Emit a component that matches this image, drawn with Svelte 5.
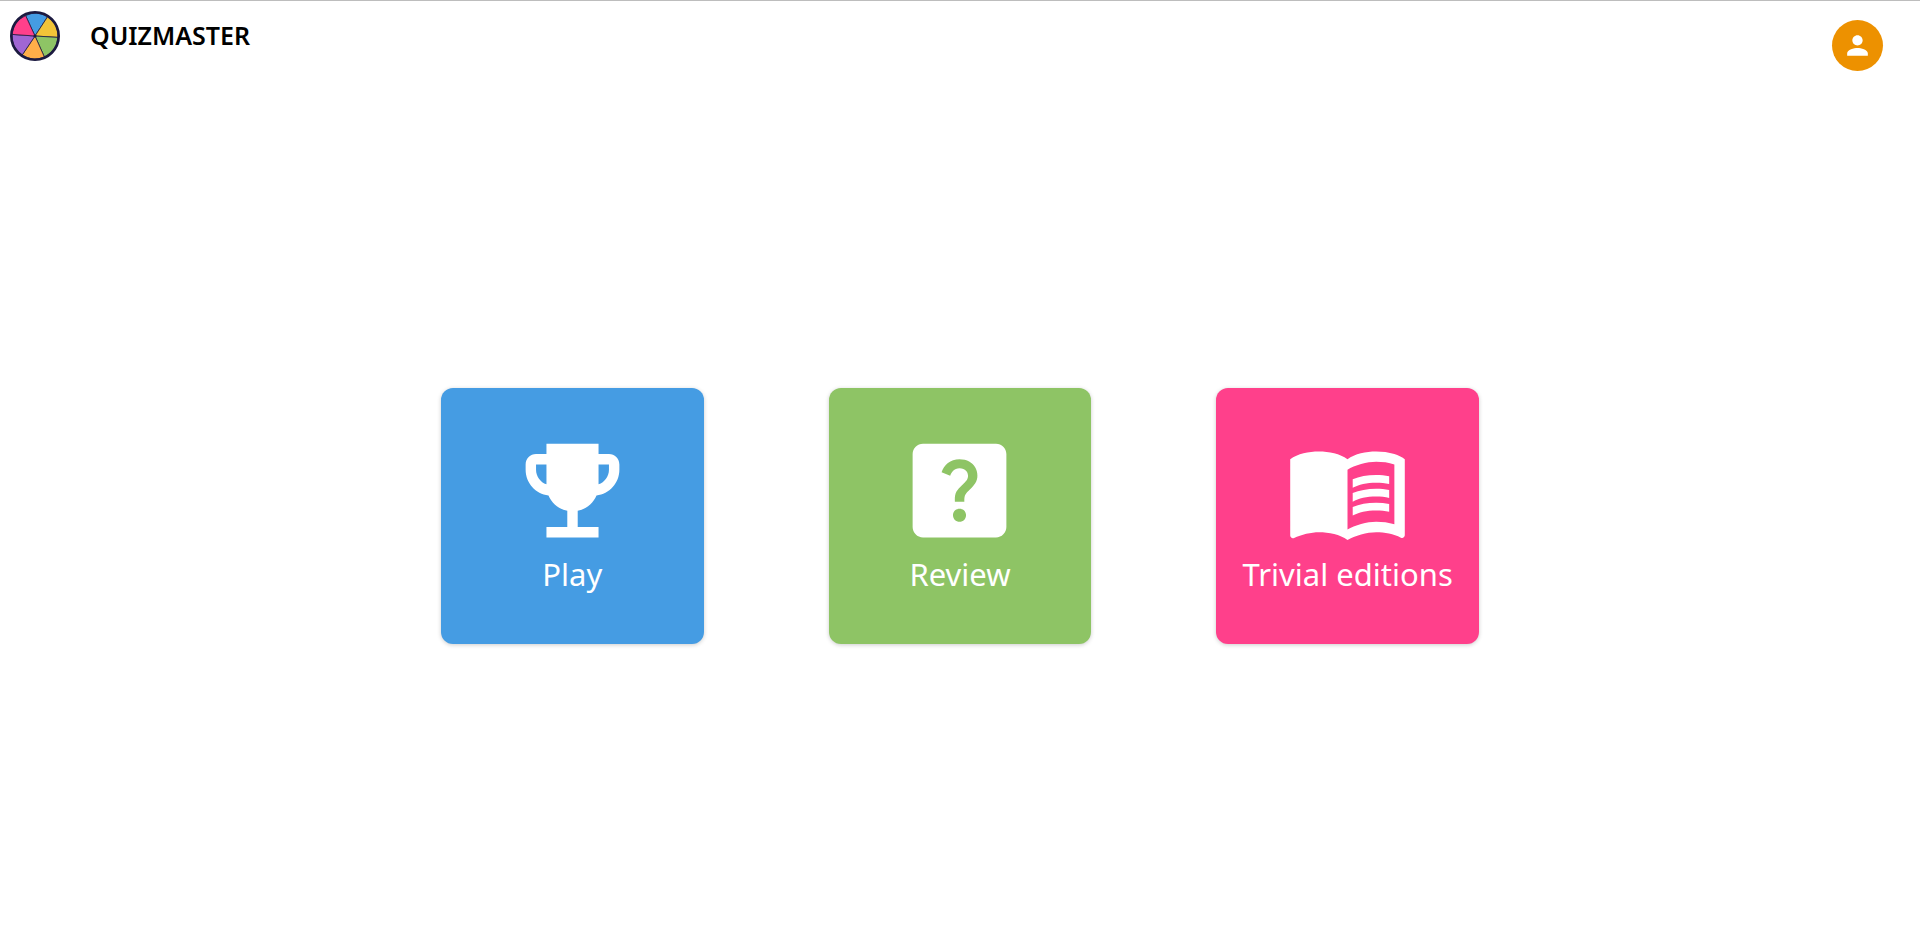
<script>
  const cards = [
    {
      label: 'Play',
      tone: 'blue',
      paths: [
        'M19 5h-2V3H7v2H5c-1.1 0-2 .9-2 2v1c0 2.55 1.92 4.63 4.39 4.94.63 1.5 1.98 2.63 3.61 2.96V19H7v2h10v-2h-4v-3.1c1.63-.33 2.98-1.46 3.61-2.96C19.08 12.63 21 10.55 21 8V7c0-1.1-.9-2-2-2zM5 8V7h2v3.82C5.84 10.4 5 9.3 5 8zm14 0c0 1.3-.84 2.4-2 2.82V7h2v1z'
      ]
    },
    {
      label: 'Review',
      tone: 'green',
      paths: [
        'M19 3H5c-1.1 0-2 .9-2 2v14c0 1.1.9 2 2 2h14c1.1 0 2-.9 2-2V5c0-1.1-.9-2-2-2zm-6.99 15c-.7 0-1.26-.56-1.26-1.26 0-.71.56-1.25 1.26-1.25.71 0 1.25.54 1.25 1.25-.01.69-.54 1.26-1.25 1.26zm3.01-7.4c-.76 1.11-1.48 1.46-1.87 2.17-.16.29-.22.48-.22 1.41h-1.82c0-.49-.08-1.29.31-1.98.49-.87 1.42-1.39 1.96-2.16.57-.81.25-2.33-1.37-2.33-1.06 0-1.58.8-1.8 1.48l-1.65-.7C9.01 7.15 10.22 6 11.99 6c1.48 0 2.49.67 3.01 1.52.44.72.7 2.07.02 3.08z'
      ]
    },
    {
      label: 'Trivial editions',
      tone: 'pink',
      paths: [
        'M21 5c-1.11-.35-2.33-.5-3.5-.5-1.95 0-4.05.4-5.5 1.5-1.45-1.1-3.55-1.5-5.5-1.5S2.45 4.9 1 6v14.65c0 .25.25.5.5.5.1 0 .15-.05.25-.05C3.1 20.45 5.05 20 6.5 20c1.95 0 4.05.4 5.5 1.5 1.35-.85 3.8-1.5 5.5-1.5 1.65 0 3.35.3 4.75 1.05.1.05.15.05.25.05.25 0 .5-.25.5-.5V6c-.6-.45-1.25-.75-2-1zm0 13.5c-1.1-.35-2.3-.5-3.5-.5-1.7 0-4.15.65-5.5 1.5V8c1.35-.85 3.8-1.5 5.5-1.5 1.2 0 2.4.15 3.5.5v11.5z',
        'M17.5 10.5c.88 0 1.73.09 2.5.26V9.24c-.79-.15-1.64-.24-2.5-.24-1.7 0-3.24.29-4.5.83v1.66c1.13-.64 2.7-.99 4.5-.99z',
        'M13 12.49v1.66c1.13-.64 2.7-.99 4.5-.99.88 0 1.73.09 2.5.26V11.9c-.79-.15-1.64-.24-2.5-.24-1.7 0-3.24.3-4.5.83z',
        'M17.5 14.33c-1.7 0-3.24.29-4.5.83v1.66c1.13-.64 2.7-.99 4.5-.99.88 0 1.73.09 2.5.26v-1.52c-.79-.16-1.64-.24-2.5-.24z'
      ]
    }
  ];
</script>

<div class="page">
  <header>
    <a class="brand" href="#home">
      <svg class="logo" viewBox="0 0 50 50" aria-hidden="true">
        <g stroke="#1c1a40" stroke-width="0.8" stroke-linejoin="round">
          <path fill="#459ce3" d="M25 25 15.6 4.6A23 23 0 0 1 37.6 5.7z" />
          <path fill="#f2c438" d="M25 25 37.6 5.7A23 23 0 0 1 48 26.4z" />
          <path fill="#8ec465" d="M25 25 48 26.4A23 23 0 0 1 34.4 46z" />
          <path fill="#ffae49" d="M25 25 34.4 46A23 23 0 0 1 12.2 44z" />
          <path fill="#a066d3" d="M25 25 12.2 44A23 23 0 0 1 2 23.4z" />
          <path fill="#ff408b" d="M25 25 2 23.4A23 23 0 0 1 15.6 4.6z" />
        </g>
        <circle cx="25" cy="25" r="23.7" fill="none" stroke="#1c1a40" stroke-width="2.6" />
        <circle cx="25" cy="25" r="1.6" fill="#1c1a40" />
      </svg>
      <span>QUIZMASTER</span>
    </a>
    <button class="avatar" type="button" aria-label="Account">
      <svg viewBox="0 0 24 24" aria-hidden="true">
        <path d="M12 12c2.21 0 4-1.79 4-4s-1.79-4-4-4-4 1.79-4 4 1.79 4 4 4zm0 2c-2.67 0-8 1.34-8 4v2h16v-2c0-2.66-5.33-4-8-4z" />
      </svg>
    </button>
  </header>

  <main>
    {#each cards as card}
      <button type="button" class="card {card.tone}">
        <svg viewBox="0 0 24 24" aria-hidden="true">
          {#each card.paths as d}
            <path {d} />
          {/each}
        </svg>
        <span>{card.label}</span>
      </button>
    {/each}
  </main>
</div>

<style>
  :global(body) {
    background: #fff;
  }

  .page {
    box-sizing: border-box;
    min-height: 100vh;
    display: flex;
    flex-direction: column;
    border-top: 1px solid #bdbdbd;
    font-family: "Noto Sans", sans-serif;
  }

  header {
    display: flex;
    justify-content: space-between;
    align-items: flex-start;
    box-sizing: border-box;
    height: 92px;
    padding: 10px 37px 0 10px;
  }

  .brand {
    display: flex;
    align-items: flex-start;
    gap: 30px;
    color: #000;
    font-size: 25px;
    font-weight: 600;
    line-height: 48px;
    text-decoration: none;
  }

  .logo {
    width: 50px;
    height: 50px;
  }

  button {
    border: 0;
    font-family: inherit;
    cursor: pointer;
  }

  svg {
    display: block;
    fill: currentColor;
  }

  .avatar {
    display: grid;
    place-items: center;
    width: 51px;
    height: 51px;
    margin-top: 9px;
    padding: 0;
    border-radius: 50%;
    background: #ed9100;
    color: #fff;
  }

  .avatar svg {
    width: 31px;
    height: 31px;
  }

  main {
    flex: 1;
    display: grid;
    grid-template-columns: repeat(3, 1fr);
    align-content: center;
    gap: 40px 125px;
    width: 100%;
    max-width: 1038px;
    margin: 0 auto;
  }

  .card {
    display: flex;
    flex-direction: column;
    align-items: center;
    padding: 40px 0 49px;
    border-radius: 12px;
    color: #fff;
    font-size: 31px;
    line-height: 42px;
    white-space: nowrap;
    box-shadow: 0 1px 4px rgba(0, 0, 0, 0.2);
  }

  .card svg {
    width: 125px;
    height: 125px;
  }

  .blue {
    background: #459ce3;
  }

  .green {
    background: #8ec465;
  }

  .pink {
    background: #ff408b;
  }

  @media (max-width: 1080px) {
    main {
      grid-template-columns: minmax(0, 263px);
      justify-content: center;
    }
  }
</style>
